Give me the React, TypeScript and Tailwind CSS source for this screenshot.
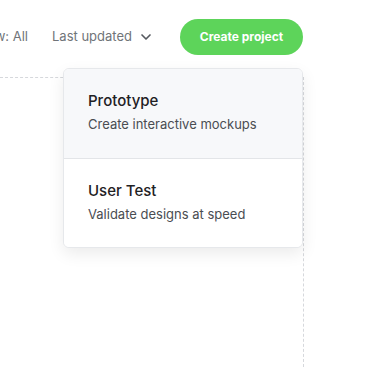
import { ChevronDown } from "lucide-react";

const menuItems = [
  { title: "Prototype", desc: "Create interactive mockups", active: true },
  { title: "User Test", desc: "Validate designs at speed", active: false },
];

export default function App() {
  return (
    <div className="relative w-[369px] h-[368px] overflow-hidden bg-white font-['Inter',sans-serif]">
      {/* Toolbar */}
      <div className="flex items-center justify-end h-[72px] pt-px pr-[66px]">
        <span className="whitespace-nowrap text-[13px] text-[#707479]">View: All</span>
        <span className="mx-3 h-[18px] w-px bg-[#e3e5e8]" />
        <button className="flex items-center gap-[6px] whitespace-nowrap text-[13px] text-[#707479]">
          Last updated
          <ChevronDown className="w-4 h-4 text-[#55595f]" strokeWidth={2.5} />
        </button>
        <button className="ml-[26px] h-9 w-[123px] shrink-0 rounded-full bg-[#5dd45a] text-[12px] font-bold text-white">
          Create project
        </button>
      </div>

      {/* Canvas area */}
      <div className="mt-[5px] w-[304px] h-[290px] border-t border-r border-dashed border-[#d6d8dc]" />

      {/* Dropdown menu */}
      <div className="absolute top-[68px] left-[63px] w-[240px] overflow-hidden rounded-md border border-[#e6e8eb] bg-white shadow-[0_6px_16px_rgba(0,0,0,0.08)]">
        {menuItems.map((item, i) => (
          <div
            key={item.title}
            className={`h-[89px] pl-6 pt-[22px] ${item.active ? "bg-[#f7f8fa]" : "bg-white"} ${i > 0 ? "border-t border-[#e3e5e8]" : ""}`}
          >
            <div className="text-[15px] leading-5 font-medium text-[#1f2124]">{item.title}</div>
            <div className="mt-[4px] text-[13px] leading-[18px] text-[#4a4d52]">{item.desc}</div>
          </div>
        ))}
      </div>
    </div>
  );
}
